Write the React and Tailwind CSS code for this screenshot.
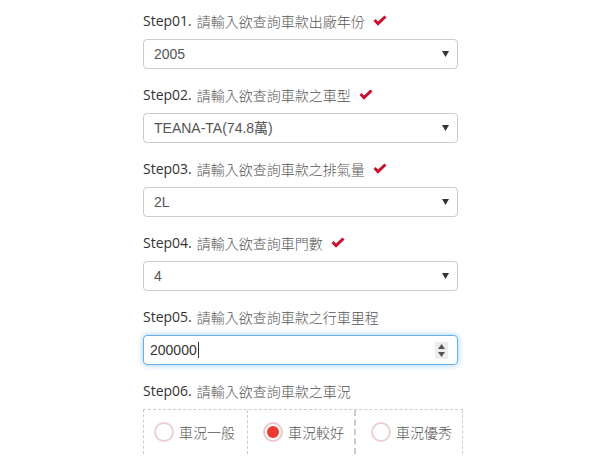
import React from "react";

const Check = () => (
  <svg width="14" height="12" viewBox="0 0 14 12" className="ml-[8px]">
    <path d="M0.5 6 L2.5 4 L5 6.5 L11.5 0.5 L13.5 2.5 L5 10.8 Z" fill="#c8102e" />
  </svg>
);

const Label = ({ step, text, check }) => (
  <div className="flex items-center h-[20px] mb-[8px] text-[14px] text-[#333] leading-[20px]">
    <span style={{ fontFamily: '"Open Sans", sans-serif' }}>{step}</span>
    <span className="ml-[5px] text-[#555] font-light" style={{ fontFamily: '"Noto Sans CJK TC", sans-serif' }}>{text}</span>
    {check && <Check />}
  </div>
);

const Select = ({ value }) => (
  <div className="flex items-center justify-between h-[30px] w-[315px] border border-[#ccc] rounded-[4px] bg-white pl-[10px] pr-[8px] mb-[16px]">
    <span className="text-[14px] text-[#555]" style={{ fontFamily: '"Liberation Sans", "Noto Sans CJK TC", sans-serif' }}>{value}</span>
    <svg width="7" height="6" viewBox="0 0 7 6"><path d="M0 0 H7 L3.5 6 Z" fill="#333" /></svg>
  </div>
);

const Radio = ({ label, checked, w, pl }) => (
  <div className={`flex items-center h-[44px] ${w} ${pl}`}>
    {checked ? (
      <div className="w-[20px] h-[20px] rounded-full border-[2px] border-[#f0c8c8] flex items-center justify-center">
        <div className="w-[12px] h-[12px] rounded-full bg-[#ea3a33]" />
      </div>
    ) : (
      <div className="w-[20px] h-[20px] rounded-full border-[2px] border-[#ead0d3]" />
    )}
    <span className="ml-[5px] text-[14px] text-[#555] font-light" style={{ fontFamily: '"Noto Sans CJK TC", sans-serif' }}>{label}</span>
  </div>
);

export default function App() {
  return (
    <div className="w-[614px] h-[463px] bg-white overflow-hidden">
      <div className="ml-[143px] pt-[11px]">
        <Label step="Step01." text="請輸入欲查詢車款出廠年份" check />
        <Select value="2005" />
        <Label step="Step02." text="請輸入欲查詢車款之車型" check />
        <Select value="TEANA-TA(74.8萬)" />
        <Label step="Step03." text="請輸入欲查詢車款之排氣量" check />
        <Select value="2L" />
        <Label step="Step04." text="請輸入欲查詢車門數" check />
        <Select value="4" />
        <Label step="Step05." text="請輸入欲查詢車款之行車里程" />
        <div className="flex items-center justify-between h-[30px] w-[315px] border border-[#66afe9] rounded-[4px] bg-white pl-[6px] pr-[9px] mb-[16px] shadow-[0_0_6px_rgba(102,175,233,0.6)]">
          <span className="flex items-center text-[14px] text-[#333]" style={{ fontFamily: '"Liberation Sans", sans-serif' }}>
            200000<span className="inline-block w-[1px] h-[16px] bg-[#333] ml-[1px]" />
          </span>
          <div className="w-[13px] h-[17px] bg-[#ececec] flex flex-col items-center justify-center gap-[3px]">
            <svg width="7" height="5" viewBox="0 0 7 5"><path d="M0 5 H7 L3.5 0 Z" fill="#555" /></svg>
            <svg width="7" height="5" viewBox="0 0 7 5"><path d="M0 0 H7 L3.5 5 Z" fill="#555" /></svg>
          </div>
        </div>
        <Label step="Step06." text="請輸入欲查詢車款之車況" />
        <div className="flex w-[320px] border-t border-l border-dashed border-[#ccc]">
          <div className="border-r border-dashed border-[#ccc]">
            <Radio label="車況一般" w="w-[103px]" pl="pl-[10px]" />
          </div>
          <div className="border-r-2 border-dashed border-[#ccc]">
            <Radio label="車況較好" checked w="w-[106px]" pl="pl-[15px]" />
          </div>
          <div className="border-r border-dashed border-[#ccc]">
            <Radio label="車況優秀" w="w-[106px]" pl="pl-[15px]" />
          </div>
        </div>
      </div>
    </div>
  );
}
